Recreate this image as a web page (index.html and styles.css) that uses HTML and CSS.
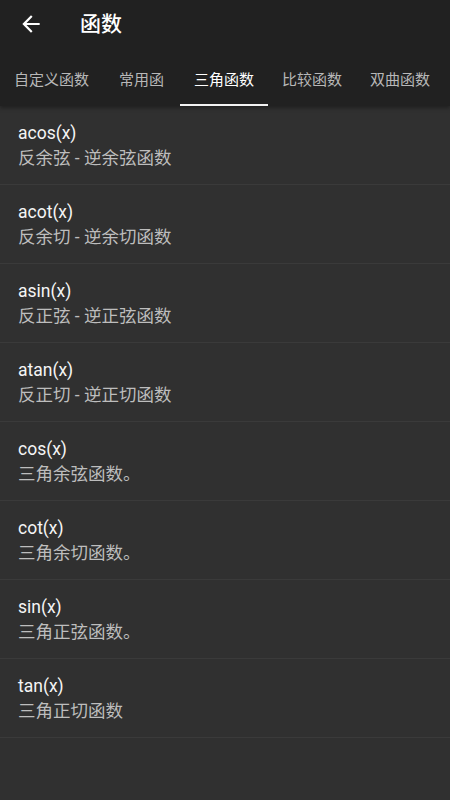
FILE: index.html
```html
<!DOCTYPE html>
<html lang="zh-CN">
<head>
<meta charset="utf-8">
<link rel="stylesheet" href="styles.css">
</head>
<body>
<div class="app">
  <header class="header">
    <div class="appbar">
      <button class="back" aria-label="返回">
        <svg width="26" height="26" viewBox="0 0 24 24"><path d="M20 11H7.83l5.59-5.59L12 4l-8 8 8 8 1.41-1.41L7.83 13H20v-2z" fill="#ffffff"/></svg>
      </button>
      <h1 class="title">函数</h1>
    </div>
    <nav class="tabs">
      <div class="tab">自定义函数</div>
      <div class="tab">常用函</div>
      <div class="tab active">三角函数</div>
      <div class="tab">比较函数</div>
      <div class="tab">双曲函数</div>
    </nav>
  </header>
  <main class="list">
    <div class="row"><div class="name">acos(x)</div><div class="desc">反余弦 - 逆余弦函数</div></div>
    <div class="row"><div class="name">acot(x)</div><div class="desc">反余切 - 逆余切函数</div></div>
    <div class="row"><div class="name">asin(x)</div><div class="desc">反正弦 - 逆正弦函数</div></div>
    <div class="row"><div class="name">atan(x)</div><div class="desc">反正切 - 逆正切函数</div></div>
    <div class="row"><div class="name">cos(x)</div><div class="desc">三角余弦函数。</div></div>
    <div class="row"><div class="name">cot(x)</div><div class="desc">三角余切函数。</div></div>
    <div class="row"><div class="name">sin(x)</div><div class="desc">三角正弦函数。</div></div>
    <div class="row"><div class="name">tan(x)</div><div class="desc">三角正切函数</div></div>
  </main>
</div>
</body>
</html>
```
FILE: styles.css
```css
html, body {
  margin: 0;
  padding: 0;
  background: #303030;
}
body {
  font-family: Roboto, "Noto Sans CJK SC", sans-serif;
  width: 450px;
  height: 800px;
  overflow: hidden;
}
.app {
  display: flex;
  flex-direction: column;
  height: 800px;
}
.header {
  background: #212121;
  height: 106px;
  display: flex;
  flex-direction: column;
  box-shadow: 0 2px 4px rgba(0,0,0,0.35);
  position: relative;
  z-index: 1;
}
.appbar {
  height: 47px;
  display: flex;
  align-items: center;
}
.back {
  background: none;
  border: 0;
  padding: 0;
  margin-left: 18px;
  width: 26px;
  height: 26px;
  display: flex;
  align-items: center;
  justify-content: center;
}
.title {
  margin: 0 0 0 36px;
  font-size: 21px;
  font-weight: 500;
  color: #ffffff;
  line-height: 28px;
}
.tabs {
  display: flex;
  height: 59px;
  white-space: nowrap;
}
.tab {
  padding: 5px 14px 0;
  min-width: 77px;
  box-sizing: border-box;
  display: flex;
  align-items: center;
  justify-content: center;
  font-size: 15px;
  color: #b8b8b8;
  border-bottom: 2px solid transparent;
}
.tab.active {
  color: #ffffff;
  border-bottom-color: #f2f2f2;
}
.list {
  display: flex;
  flex-direction: column;
}
.row {
  padding: 15px 18px 13px;
  border-bottom: 1px solid #3a3a3a;
}
.name {
  font-size: 17.5px;
  line-height: 25px;
  color: #f5f5f5;
}
.desc {
  font-size: 17.5px;
  line-height: 25px;
  color: #bdbdbd;
}
```
